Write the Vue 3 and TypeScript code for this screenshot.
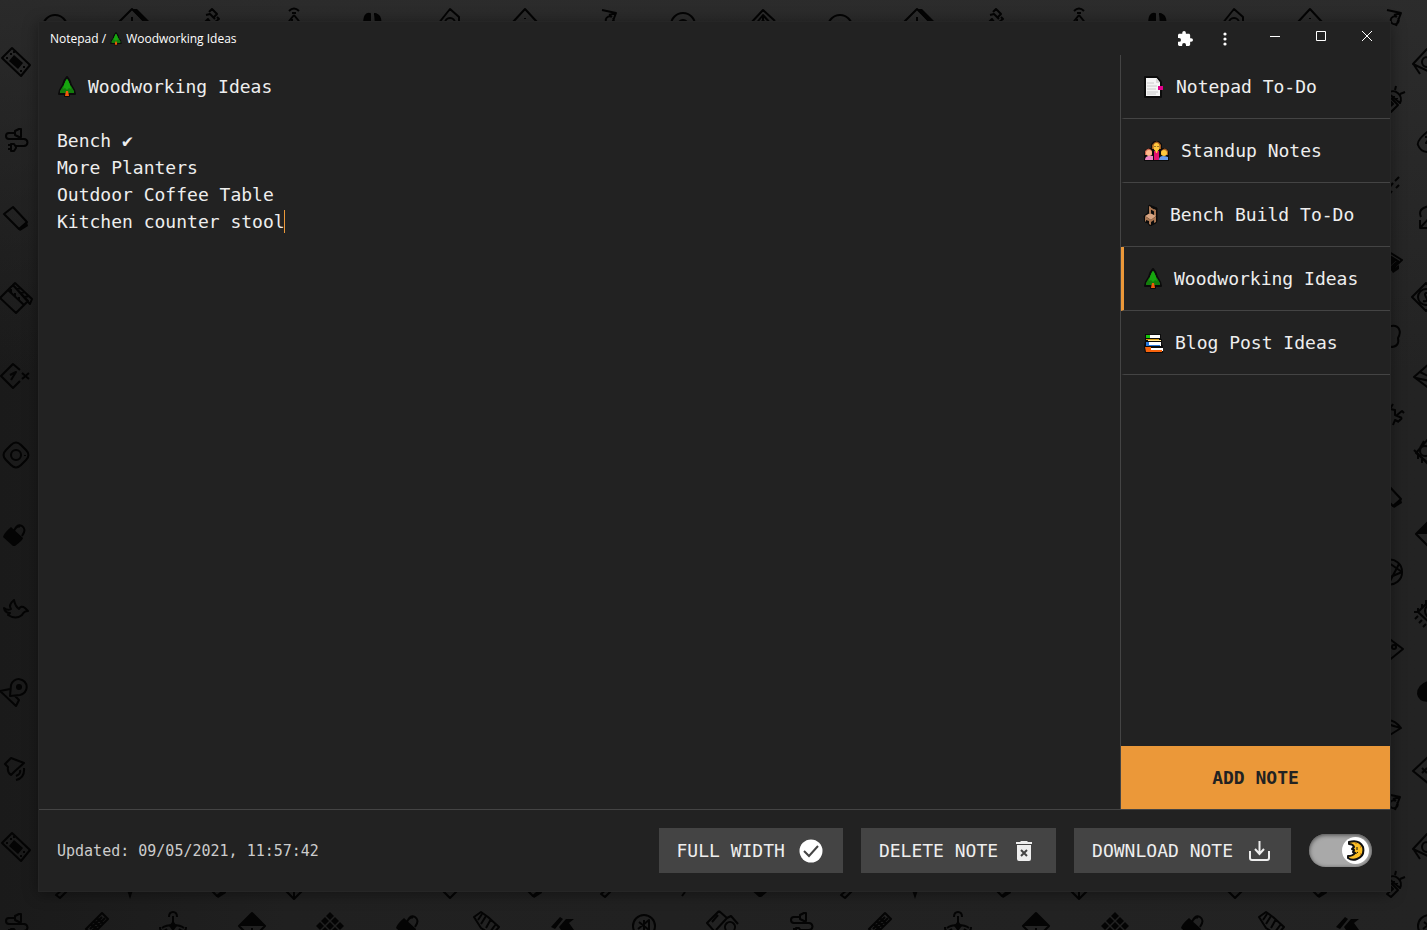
<script setup lang="ts">
import { ref } from 'vue'

type EmojiName = 'page' | 'family' | 'chair' | 'tree' | 'books'

interface Note {
  id: number
  title: string
  emoji: EmojiName
}

interface Glyph {
  line?: string
  solid?: string
}

const notes: Note[] = [
  { id: 1, title: 'Notepad To-Do', emoji: 'page' },
  { id: 2, title: 'Standup Notes', emoji: 'family' },
  { id: 3, title: 'Bench Build To-Do', emoji: 'chair' },
  { id: 4, title: 'Woodworking Ideas', emoji: 'tree' },
  { id: 5, title: 'Blog Post Ideas', emoji: 'books' },
]

const activeId = ref(4)
const darkMode = ref(true)
const fullWidth = ref(true)
const body = ref(
  'Woodworking Ideas\n\nBench ✔\nMore Planters\nOutdoor Coffee Table\nKitchen counter stool',
)

const emojiWidth: Record<EmojiName, number> = { page: 22, family: 27, chair: 16, tree: 20, books: 21 }

const glyphs: Record<string, Glyph> = {
  handheld: {
    line: 'M-4 -14L14 3L5 14L-14 -4Z',
    solid: 'M-2 -7L7 1L2 7L-7 -1ZM-6 -9h2v2h-2zM-10 -5h2v2h-2zM-3 -11h2v2h-2zM7 4h2v2h-2zM4 8h2v2h-2zM9 7h1v2h-1z',
  },
  plug: { line: 'M5 -11v8H3l-4 -2v-4l4 -2zM-1 -7H-7a3 3 0 0 0 0 6H8a3 3 0 0 1 0 7H0M0 7l-2 -3H-5v7h3l2 -3zM-5 5h-3M-5 9h-3' },
  tag: { line: 'M-3 -11L11 4L3 11L-12 -4Z', solid: 'M11 4l1 4l-8 5l-2 -2z' },
  clapper: {
    line: 'M-3 -13L-16 0L0 15L12 3ZM-3 -13L14 6L16 1L-1 -15ZM1 -9l4 -1M5 -5l4 -1M9 -1l4 -1M-8 -8L8 7M-5 -5v-4M-1 -1v-4M3 3v-4',
  },
  once: { line: 'M5 -6L-2 -12L-14 0L-2 12L5 5M-5 -1L1 -4L-4 4M7 -3l7 6M14 -3l-7 6' },
  camera: { line: 'M-5 -10Q0 -15 5 -10L10 -5Q15 0 10 5L5 10Q0 15 -5 10L-10 5Q-15 0 -10 -5ZM5 0A5 5 0 1 1 -5 0A5 5 0 1 1 5 0M9 0v1' },
  lock: { line: 'M0 -4Q3 -12 8 -9Q13 -6 8 1M-1 -3Q3 -10 6 -8', solid: 'M-3 -8L9 3Q9 5 1 11H-1L-11 2Q-10 -2 -3 -8Z' },
  bird: { line: 'M-11 -1Q-7 2 -4 0Q-7 -4 -1 -9Q0 -3 4 0Q6 -4 10 -1L13 2Q9 2 7 6Q1 11 -7 6l2 -2Q-10 4 -11 -1Z' },
  pin: {
    line: 'M-4 4L-3 -7A8 8 0 1 1 6 3ZM-4 -3L-14 -1L2 14L5 8L1 4',
    solid: 'M8 -5A3 3 0 1 1 2 -5A3 3 0 1 1 8 -5',
  },
  speaker: { line: 'M-10 -5L-4 -11L9 -6L0 2L-4 6Q-8 3 -7 -2ZM5 1Q6 5 1 7M9 -1Q10 9 1 11' },
  remote: { line: 'M5 -11L11 -5L-5 11L-11 5ZM0 -6L6 0M-3 -3L3 3M-6 0L0 6M3 -9L-9 3M8 -6L-6 8M5 -7L-7 5' },
  drone: { line: 'M0 -10v20M-11 2q4 -3 11 -3t11 3M-13 1q0 7 7 2M13 1q0 7 -7 2M-4 -9q0 -5 4 -5t4 5', solid: 'M-4 0L0 -5L4 0L0 5Z' },
  cube: { line: 'M-13 0L0 -13L13 0L0 13ZM0 2v10', solid: 'M-13 0L0 -13L13 0Z' },
  caret: { line: 'M-13 0L0 13L13 0M0 0v12' },
  rubik: { solid: 'M0 -14l4 4l-4 4l-4 -4zM-5 -9l4 4l-4 4l-4 -4zM5 -9l4 4l-4 4l-4 -4zM-10 -4l4 4l-4 4l-4 -4zM0 -4l4 4l-4 4l-4 -4zM10 -4l4 4l-4 4l-4 -4zM-5 1l4 4l-4 4l-4 -4zM5 1l4 4l-4 4l-4 -4z' },
  watch: { line: 'M-13 -8L-6 -13L1 -8L12 2L5 10L-6 3ZM-5 -11L-9 -5M-1 -9L-6 -1M4 -6L-1 3M9 -1L3 7' },
  bolt: { solid: 'M-12 1L-3 -9L0 -7L-8 3ZM-4 1L3 -7L11 -7L6 -3L11 4H-2Z' },
  ball: { line: 'M11 0A11 11 0 1 1 -11 0A11 11 0 1 1 11 0M-5 -4L5 4V-6L-6 3M0 -6V6' },
  card: { line: 'M-2 -13L-14 -1L-6 8M-2 -13L6 -6L-5 6M-3 -9L-9 -2M6 -6L10 -8L17 0M5 6A5 5 0 1 1 13 6' },
  headphones: { line: 'M-12 4A12 12 0 0 1 12 4', solid: 'M-13 2h7v8h-5z' },
  sign: { line: 'M0 -14L-14 0L0 14L14 0ZM0 -6v6', solid: 'M0 -14L5 -14L18 -1L14 2Z' },
  pens: { line: 'M-11 4L-3 -4L2 3M-5 -8L-1 -9L4 -4M-2 -11L1 -14L6 -9L3 -6M6 -6L8 -4L4 -1M8 0L12 3' },
  antenna: { line: 'M0 -6L-8 4M0 -6L8 4M-2 -2v4M2 2v2M-5 -10q5 -5 10 0M-2 -8h4' },
  glasses: { line: 'M-8 3Q-8 -10 -2 -8V3M2 -8Q10 -7 8 3', solid: 'M-8 2Q-8 -11 -2 -8v10zM2 -9Q9 -9 8 3h-5z' },
  roundtag: { line: 'M-12 2L0 -13L9 -5V4M5 1A5 5 0 0 0 -5 1M-2 0h3' },
  dice: { line: 'M-12 0L0 -13L12 0L0 12ZM0 -4v1M-4 1v1M4 1v1' },
  lamp: { line: 'M-6 -12L8 -9L1 -7M8 -9L3 4M4 -5A4 4 0 1 0 5 -4' },
  disc: { line: 'M12 2A12 12 0 0 0 -12 2M5 2A5 5 0 0 0 -5 2' },
  maze: { line: 'M-13 2L0 -12L12 -1M-8 3L0 -7L8 2M-3 3L0 -2L4 3M0 -7v7' },
  android: { line: 'M-3 -7A8 8 0 0 1 9 3L-3 -7M4 -10L5 -14M9 -6L14 -8M0 -2L7 5L0 12L-4 9L2 4L-4 -2M3 -4v1M6 -2v1' },
  dashes: { line: 'M-8 -3L-4 -8M-3 3L2 -3M4 -5L8 -9M-2 9L1 5M5 2L8 -1' },
  money: { line: 'M0 -13L14 1L5 11L-14 2ZM-13 3L-7 12M5 0A5 5 0 1 1 -5 0A5 5 0 1 1 5 0' },
  coin: { line: 'M0 -14L14 0L0 14L-14 0ZM8 0A8 8 0 1 1 -8 0A8 8 0 1 1 8 0M3 -4Q-3 -5 0 0T-3 4' },
  sleep: { line: 'M5 -13Q-11 -1 -9 4Q-6 12 3 11M-2 -4h5l-4 6h5' },
  swap: { line: 'M-6 0Q-10 -9 3 -11M-7 3V11H1M-7 11L4 -1' },
  brain: { line: 'M-8 -9Q3 -14 6 -8Q8 -4 5 1Q7 10 -3 10L-8 8M-5 -4v9' },
  film: { line: 'M0 -12L-12 2L0 12M-4 -10L-8 -3M-14 -1L0 13M2 0A5 5 0 1 1 -8 0A5 5 0 1 1 2 0M-10 2v6M-6 6v6' },
  chip: { line: 'M3 -12L-10 1L3 13M4 -7A6 6 0 0 0 4 7M-2 -11v4M-6 -7v4M-10 -3v4M-14 1h4M-10 5l-3 3M-6 9l-3 3M-2 13l-3 3' },
  apple: { solid: 'M6 -12Q-9 -9 -9 2Q-7 12 7 9Z' },
  pad: { line: 'M3 -13L-12 1L4 14M-3 -2l5 5M2 -2l-5 5M3 6v1' },
  box: { line: 'M4 -13L-12 1L4 13M-10 2L4 5M-6 -4L4 1' },
  folder: { line: 'M-10 -14L11 -1L0 9M-6 -8L7 0L-2 8', solid: 'M-8 -7L6 -1L-2 6L-8 3ZM0 9L8 4V8L2 12Z' },
  blot: { line: 'M0 -12L-3 -7L2 -6L2 -1L9 2M0 9L2 4L6 6M4 -1L9 -5L11 -3M9 2L6 5' },
  wheel: { line: 'M6 0A12 12 0 0 1 -9 12M6 0A12 12 0 0 0 -9 -12M-7 -9L6 0L-8 6M-7 11L3 -8' },
  photo: { line: 'M-8 -11L8 1L-8 14M1 -1A2 2 0 1 1 -3 -1A2 2 0 1 1 1 -1M-10 5Q-4 1 -5 10' },
  cup: { line: 'M-10 -8Q-2 -11 6 -1L-10 9M-10 -6Q-2 -3 6 -1' },
  spike: { solid: 'M-4 0H4L0 12Z' },
}

const pattern: [string, number, number][] = [
  ['handheld', 16, 62], ['plug', 16, 140], ['tag', 16, 218], ['clapper', 16, 298], ['once', 15, 376],
  ['camera', 16, 455], ['lock', 14, 535], ['bird', 15, 609], ['pin', 14, 692], ['speaker', 15, 769],
  ['handheld', 16, 847], ['plug', 16, 925],
  ['headphones', 55, 23], ['sign', 132, 23], ['pens', 211, 23], ['antenna', 294, 21], ['glasses', 372, 22],
  ['roundtag', 450, 22], ['dice', 525, 22], ['lamp', 608, 22], ['disc', 683, 23], ['maze', 763, 22],
  ['headphones', 840, 23], ['sign', 917, 23], ['pens', 995, 23], ['antenna', 1079, 21], ['glasses', 1157, 22],
  ['roundtag', 1234, 22], ['dice', 1310, 22], ['lamp', 1393, 22],
  ['remote', 97, 924], ['drone', 173, 926], ['cube', 252, 926], ['rubik', 330, 926], ['lock', 407, 926],
  ['watch', 487, 925], ['bolt', 563, 926], ['ball', 644, 926], ['card', 721, 924], ['plug', 801, 924],
  ['remote', 880, 924], ['drone', 958, 926], ['cube', 1036, 926], ['rubik', 1115, 926], ['lock', 1192, 926],
  ['watch', 1272, 925], ['bolt', 1348, 926], ['ball', 1429, 926],
  ['android', 60, 886], ['spike', 130, 887], ['tag', 214, 885], ['caret', 294, 886], ['disc', 374, 888],
  ['dice', 450, 886], ['tag', 530, 885], ['android', 605, 885], ['dashes', 684, 887], ['lock', 760, 886],
  ['android', 845, 886], ['spike', 915, 887], ['tag', 999, 885], ['caret', 1079, 886], ['disc', 1159, 888],
  ['dice', 1235, 886], ['tag', 1315, 885],
  ['android', 1391, 100], ['dashes', 1391, 186], ['folder', 1391, 261], ['brain', 1393, 337], ['blot', 1393, 416],
  ['tag', 1390, 495], ['wheel', 1396, 572], ['photo', 1395, 648], ['cup', 1395, 729], ['lamp', 1392, 806],
  ['android', 1391, 885],
  ['money', 1427, 62], ['sleep', 1427, 141], ['swap', 1427, 217], ['coin', 1426, 297], ['box', 1426, 376],
  ['film', 1428, 451], ['cube', 1429, 534], ['chip', 1428, 611], ['apple', 1426, 692], ['pad', 1425, 770],
  ['money', 1427, 847],
]
</script>

<template>
  <svg class="defs" aria-hidden="true">
    <symbol id="tree" viewBox="0 0 20 22">
      <path d="M10 1Q13 4 14 9L17 14L18 18L12 18V20H8V18L2 18L3 14L6 9Q7 4 10 1Z" fill="#16a10f" stroke="#0b0b0b" stroke-width="2" stroke-linejoin="round" />
      <path d="M10 7l4 3l3 5v2H3v-2l3 -5z" fill="#137d0c" />
      <path d="M10 3q3 4 4 10l-2 -1l-2 2l-2 -2l-2 1q1 -6 4 -10z" fill="#17a60f" />
      <path d="M9 15h2l1 5H8z" fill="#f25a0b" />
    </symbol>
    <symbol id="page" viewBox="0 0 22 22">
      <path d="M2 1H14L18 6V21H2Z" fill="#f5f5f5" stroke="#0b0b0b" stroke-width="2" stroke-linejoin="round" />
      <path d="M4 7h7M4 10h10M4 13h9M4 16h11M4 18h9" stroke="#cacaca" />
      <path d="M13 2v5h4" fill="#d9d9d9" />
      <path d="M15 10h5v4h-5z" fill="#e3008c" />
    </symbol>
    <symbol id="family" viewBox="0 0 27 22">
      <path d="M1 21v-5l1 -6l4 -2h2V4l3 -3h5l3 3v4l5 1l2 3v9z" fill="#0b0b0b" />
      <path d="M9 9V5q5 -7 9 0v4z" fill="#a55d20" />
      <ellipse cx="13.500" cy="7" rx="3" ry="4" fill="#ffc83d" />
      <path d="M11 11h5v9h-5z" fill="#e3126f" />
      <path d="M12 10h3l-1 3h-1z" fill="#ffc83d" />
      <path d="M2 15v-4q4 -5 7 0v4z" fill="#c9684f" />
      <path d="M18 15v-4q4 -5 7 0v4z" fill="#a55d20" />
      <circle cx="6" cy="13" r="3" fill="#ffb98c" />
      <circle cx="21" cy="13" r="3" fill="#ffc83d" />
      <path d="M2 20q0 -5 8 -4v4z" fill="#ee86c5" />
      <path d="M16 20q0 -6 9 -3v3z" fill="#699bea" />
      <path d="M12 6v1M15 6v1" stroke="#3b2415" />
    </symbol>
    <symbol id="chair" viewBox="0 0 16 22">
      <path d="M6 1L14 4V17L13 19L7 22L5 19L2 18L1 12L5 9Z" fill="#0b0b0b" stroke="#0b0b0b" stroke-linejoin="round" />
      <path d="M6 2L8 3V9H6ZM11 5L13 6V12H11ZM7 3L12 6V8L7 5Z" fill="#a97652" />
      <path d="M2 12l5 -3l6 3l-5 4z" fill="#d8a582" />
      <path d="M2 12l6 4v5l-2 -1v-3l-3 -1v2l-1 -1zM8 16l5 -4v6l-2 1v-3l-3 2z" fill="#a97652" />
    </symbol>
    <symbol id="books" viewBox="0 0 21 22">
      <path d="M2 2H18V7H19V13H20V21H2L1 14L2 9Z" fill="#0b0b0b" />
      <path d="M5 3h12v3H5z" fill="#fff" /><path d="M3 3h4v3H3z" fill="#16c60c" />
      <path d="M5 8h13v1H5z" fill="#ffe28c" /><path d="M3 7h13v1H3z" fill="#d39b14" />
      <path d="M5 10h13v4H5z" fill="#fff" /><path d="M3 10h3v3h11v1H3z" fill="#2878dc" />
      <path d="M8 16h12v3H8z" fill="#fff" /><path d="M2 15h6v3h11v2H3z" fill="#f7630c" />
    </symbol>
  </svg>

  <div class="desktop">
    <svg class="wallpaper" viewBox="0 0 1427 930" preserveAspectRatio="xMidYMid slice" aria-hidden="true">
      <g v-for="([name, x, y], i) in pattern" :key="i" :transform="`translate(${x} ${y})`">
        <path v-if="glyphs[name].line" class="ink-line" :d="glyphs[name].line" />
        <path v-if="glyphs[name].solid" class="ink-solid" :d="glyphs[name].solid" />
      </g>
    </svg>

    <div class="window">
      <header class="titlebar">
        <div class="caption">
          <span>Notepad /</span>
          <svg class="caption-tree" viewBox="0 0 20 22" aria-hidden="true"><use href="#tree" /></svg>
          <span>Woodworking Ideas</span>
        </div>
        <div class="tools">
          <button type="button" class="tool" aria-label="Extensions">
            <svg width="15" height="15" viewBox="2 1 21 21"><path fill="#fff" d="M20.500 11H19V7c0-1.100-.9-2-2-2h-4V3.500a2.500 2.500 0 0 0-5 0V5H4c-1.100 0-2 .9-2 2v3.800h1.500a2.700 2.700 0 0 1 0 5.400H2V20c0 1.100.9 2 2 2h3.800v-1.500a2.700 2.700 0 0 1 5.400 0V22H17c1.100 0 2-.9 2-2v-4h1.500a2.500 2.500 0 0 0 0-5z" /></svg>
          </button>
          <button type="button" class="tool" aria-label="Menu">
            <svg width="4" height="14" viewBox="0 0 4 14" fill="#fff"><circle cx="2" cy="2" r="1.600" /><circle cx="2" cy="7" r="1.600" /><circle cx="2" cy="12" r="1.600" /></svg>
          </button>
        </div>
        <div class="controls">
          <button type="button" class="control" aria-label="Minimize">
            <svg width="10" height="10" viewBox="0 0 10 10"><path fill="#fff" d="M0 5h10v1H0z" /></svg>
          </button>
          <button type="button" class="control" aria-label="Maximize">
            <svg width="10" height="10" viewBox="0 0 10 10"><path fill="none" stroke="#fff" d="M.5.5h9v9h-9z" /></svg>
          </button>
          <button type="button" class="control" aria-label="Close">
            <svg width="10" height="10" viewBox="0 0 10 10"><path fill="none" stroke="#fff" d="M0 0L10 10M10 0L0 10" /></svg>
          </button>
        </div>
      </header>

      <main class="content">
        <section class="editor">
          <svg class="editor-tree" viewBox="0 0 20 22" aria-hidden="true"><use href="#tree" /></svg>
          <textarea v-model="body" class="editor-text" aria-label="Note" spellcheck="false"></textarea>
          <span class="caret" aria-hidden="true"></span>
        </section>

        <aside class="sidebar">
          <nav class="notes" aria-label="Notes">
            <button
              v-for="note in notes"
              :key="note.id"
              type="button"
              class="note"
              :class="{ active: note.id === activeId }"
              @click="activeId = note.id"
            >
              <svg :width="emojiWidth[note.emoji]" height="22" aria-hidden="true"><use :href="'#' + note.emoji" /></svg>
              <span>{{ note.title }}</span>
            </button>
          </nav>
          <button type="button" class="add">ADD NOTE</button>
        </aside>
      </main>

      <footer class="footer">
        <p class="updated">Updated: 09/05/2021, 11:57:42</p>
        <div class="actions">
          <button type="button" class="action" :aria-pressed="fullWidth" @click="fullWidth = !fullWidth">
            FULL WIDTH
            <svg width="26" height="26" viewBox="0 0 26 26" aria-hidden="true">
              <circle cx="12" cy="13" r="11.500" fill="#fff" />
              <path d="M5 13l5 5l9 -10" fill="none" stroke="#444" stroke-width="2" />
            </svg>
          </button>
          <button type="button" class="action">
            DELETE NOTE
            <svg width="26" height="26" viewBox="0 0 26 26" aria-hidden="true">
              <path fill="#eee" d="M4 4h4l1 -1h6l1 1h4v2H4zM5 7h14v14q0 2 -2 2H7q-2 0 -2 -2z" />
              <path d="M9 12l6 6M15 12l-6 6" stroke="#444" stroke-width="2" />
            </svg>
          </button>
          <button type="button" class="action">
            DOWNLOAD NOTE
            <svg width="26" height="26" viewBox="0 0 26 26" aria-hidden="true">
              <path d="M3 13v7q0 2 2 2h15q2 0 2 -2v-7M12.500 3v13M8 11l4.500 5l4.500 -5" fill="none" stroke="#eee" stroke-width="2" />
            </svg>
          </button>
          <label class="theme">
            <input v-model="darkMode" type="checkbox" class="theme-input" aria-label="Dark mode" />
            <span class="knob">
              <svg width="19" height="21" viewBox="0 0 19 21" aria-hidden="true">
                <path d="M3 2Q13 -1 17 7Q19 16 11 19Q6 21 2 18L2 16Q7 16 9 13L7 12L8 10L6 9L8 7Q7 4 3 4Z" fill="#fcbf24" stroke="#111" stroke-width="2" stroke-linejoin="round" />
                <path d="M11 7v3M8 13q3 1 4 -1" fill="none" stroke="#111" />
                <path d="M14 6h1v2h-1zM14 13h1v2h-1zM9 3h2v1h-2z" fill="#d98a14" />
              </svg>
            </span>
          </label>
        </div>
      </footer>
    </div>
  </div>
</template>

<style>
html,
body {
  margin: 0;
  background: #202020;
}
</style>

<style scoped>
.defs {
  position: absolute;
  width: 0;
  height: 0;
}

.desktop {
  position: relative;
  box-sizing: border-box;
  min-height: 100vh;
  padding: 21px 36px 38px 38px;
  display: flex;
  overflow: hidden;
  background:
    linear-gradient(to bottom, rgba(46, 46, 46, 0.8) 0, rgba(38, 38, 38, 0) 40%),
    linear-gradient(to right, #1a1a1a 0, #202020 20%, #232323 100%);
}

.wallpaper {
  position: absolute;
  inset: 0;
  width: 100%;
  height: 100%;
}

.ink-line {
  fill: none;
  stroke: #040404;
  stroke-width: 2;
  stroke-linejoin: round;
}

.ink-solid {
  fill: #040404;
}

.window {
  position: relative;
  box-sizing: border-box;
  flex: 1;
  min-width: 0;
  display: flex;
  flex-direction: column;
  border: 1px solid #262626;
  background: #222;
  box-shadow: 0 2px 14px rgba(0, 0, 0, 0.4);
  color: #eee;
  font-family: "DejaVu Sans Mono", "Liberation Mono", monospace;
  font-size: 18px;
}

button {
  border: 0;
  background: none;
  color: inherit;
  font: inherit;
  cursor: pointer;
}

.titlebar {
  height: 33px;
  flex: none;
  display: flex;
  align-items: center;
}

.caption {
  flex: 1;
  display: flex;
  align-items: center;
  gap: 3px;
  padding-left: 11px;
  color: #fff;
  font-family: "Open Sans", "Noto Sans", sans-serif;
  font-size: 12px;
}

.caption-tree {
  width: 14px;
  height: 14px;
}

.tools {
  display: flex;
  padding-right: 7px;
}

.tool {
  width: 40px;
  height: 32px;
  padding: 0;
  display: flex;
  align-items: center;
  justify-content: center;
}

.controls {
  display: flex;
  align-self: flex-start;
}

.control {
  width: 46px;
  height: 28px;
  padding: 0;
  display: flex;
  align-items: center;
  justify-content: center;
}

.content {
  flex: 1;
  min-height: 0;
  display: flex;
}

.editor {
  position: relative;
  flex: 1;
  min-width: 0;
  display: flex;
}

.editor-text {
  flex: 1;
  min-width: 0;
  padding: 18px;
  border: 0;
  outline: 0;
  resize: none;
  background: none;
  color: #eee;
  font: inherit;
  line-height: 27px;
  text-indent: 31px;
  caret-color: #eb9839;
}

.editor-tree {
  position: absolute;
  top: 21px;
  left: 18px;
  width: 20px;
  height: 22px;
}

.caret {
  position: absolute;
  top: 155px;
  left: calc(17px + 21ch);
  width: 1px;
  height: 23px;
  background: #eb9839;
}

.sidebar {
  box-sizing: border-box;
  width: 270px;
  flex: none;
  display: flex;
  flex-direction: column;
  border-left: 1px solid #444;
}

.notes {
  flex: 1;
}

.note {
  box-sizing: border-box;
  width: 100%;
  height: 64px;
  padding: 0 18px 0 19px;
  display: flex;
  align-items: center;
  gap: 11px;
  border-left: 3px solid transparent;
  border-bottom: 1px solid #444;
  text-align: left;
  white-space: nowrap;
}

.note.active {
  border-left-color: #eb9839;
}

.add {
  height: 63px;
  background: #eb9839;
  color: #222;
  font-weight: bold;
}

.footer {
  flex: none;
  display: flex;
  align-items: center;
  justify-content: space-between;
  padding: 18px;
  border-top: 1px solid #444;
}

.updated {
  margin: 0;
  color: #ccc;
  font-size: 15px;
}

.actions {
  display: flex;
  align-items: center;
  gap: 18px;
}

.action {
  height: 45px;
  padding: 0 18px;
  display: flex;
  align-items: center;
  gap: 14px;
  background: #444;
  white-space: nowrap;
}

.theme {
  position: relative;
  display: flex;
}

.theme-input {
  appearance: none;
  width: 63px;
  height: 33px;
  margin: 0;
  border-radius: 17px;
  background: #a9a9a9;
  box-shadow: inset 0 1px 4px #444;
}

.knob {
  position: absolute;
  top: 3px;
  left: 3px;
  width: 27px;
  height: 27px;
  display: flex;
  align-items: center;
  justify-content: center;
  border-radius: 50%;
  background: #fff;
  pointer-events: none;
}

.theme-input:checked + .knob {
  left: 33px;
}
</style>
